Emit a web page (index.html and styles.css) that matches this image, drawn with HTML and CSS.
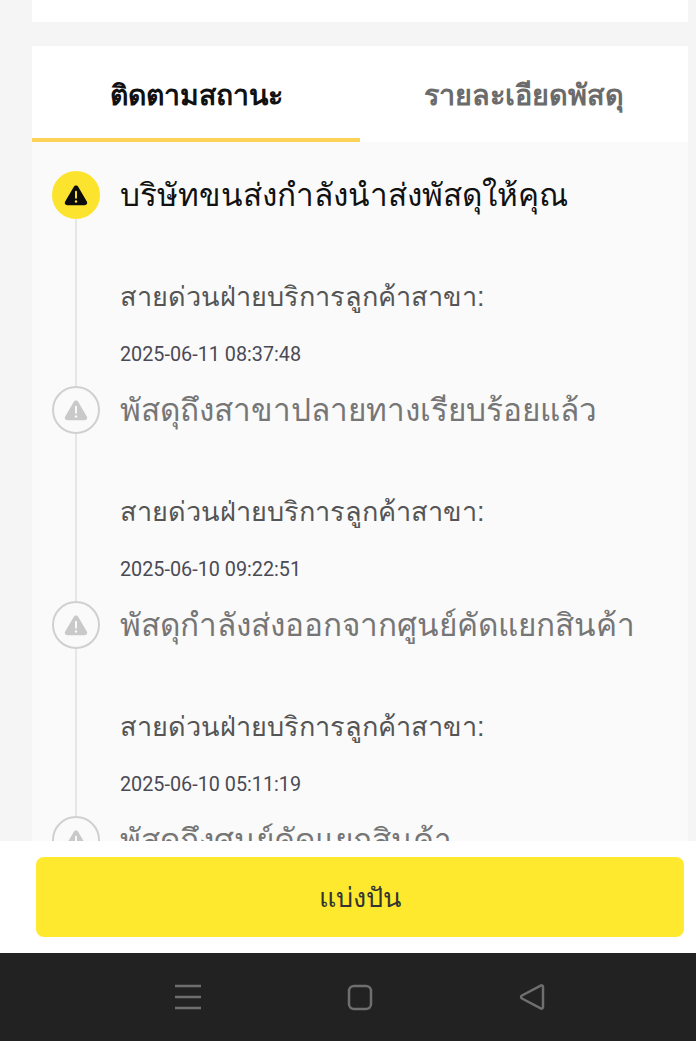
FILE: index.html
```html
<!DOCTYPE html>
<html lang="th">
<head>
<meta charset="utf-8">
<title>ติดตามสถานะ</title>
<link rel="stylesheet" href="styles.css">
</head>
<body>
<div class="page">
  <main class="scroll">
    <div class="top-card"></div>
    <section class="card">
      <div class="tabs">
        <div class="tab tab-active">ติดตามสถานะ</div>
        <div class="tab">รายละเอียดพัสดุ</div>
      </div>
      <div class="timeline">
        <div class="step step-current">
          <div class="marker"><svg class="warn" viewBox="0 0 24 24"><path class="warn-body" d="M12 3.200c-.9 0-1.600.5-2 1.200L2 18c-.9 1.600.2 3.400 2 3.400h16c1.800 0 2.900-1.800 2-3.400L14 4.400c-.4-.7-1.100-1.200-2-1.200z"/><rect class="warn-mark" x="11.100" y="8" width="1.800" height="7.400" rx=".9"/><circle class="warn-mark" cx="12" cy="18" r="1.100"/></svg></div>
          <div class="body">
            <div class="title">บริษัทขนส่งกำลังนำส่งพัสดุให้คุณ</div>
            <div class="sub">สายด่วนฝ่ายบริการลูกค้าสาขา:</div>
            <div class="date">2025-06-11 08:37:48</div>
          </div>
        </div>
        <div class="step">
          <div class="marker"><svg class="warn" viewBox="0 0 24 24"><path class="warn-body" d="M12 3.200c-.9 0-1.600.5-2 1.200L2 18c-.9 1.600.2 3.400 2 3.400h16c1.800 0 2.900-1.800 2-3.400L14 4.400c-.4-.7-1.100-1.200-2-1.200z"/><rect class="warn-mark" x="11.100" y="8" width="1.800" height="7.400" rx=".9"/><circle class="warn-mark" cx="12" cy="18" r="1.100"/></svg></div>
          <div class="body">
            <div class="title">พัสดุถึงสาขาปลายทางเรียบร้อยแล้ว</div>
            <div class="sub">สายด่วนฝ่ายบริการลูกค้าสาขา:</div>
            <div class="date">2025-06-10 09:22:51</div>
          </div>
        </div>
        <div class="step">
          <div class="marker"><svg class="warn" viewBox="0 0 24 24"><path class="warn-body" d="M12 3.200c-.9 0-1.600.5-2 1.200L2 18c-.9 1.600.2 3.400 2 3.400h16c1.800 0 2.900-1.800 2-3.400L14 4.400c-.4-.7-1.100-1.200-2-1.200z"/><rect class="warn-mark" x="11.100" y="8" width="1.800" height="7.400" rx=".9"/><circle class="warn-mark" cx="12" cy="18" r="1.100"/></svg></div>
          <div class="body">
            <div class="title">พัสดุกำลังส่งออกจากศูนย์คัดแยกสินค้า</div>
            <div class="sub">สายด่วนฝ่ายบริการลูกค้าสาขา:</div>
            <div class="date">2025-06-10 05:11:19</div>
          </div>
        </div>
        <div class="step">
          <div class="marker"><svg class="warn" viewBox="0 0 24 24"><path class="warn-body" d="M12 3.200c-.9 0-1.600.5-2 1.200L2 18c-.9 1.600.2 3.400 2 3.400h16c1.800 0 2.900-1.800 2-3.400L14 4.400c-.4-.7-1.100-1.200-2-1.200z"/><rect class="warn-mark" x="11.100" y="8" width="1.800" height="7.400" rx=".9"/><circle class="warn-mark" cx="12" cy="18" r="1.100"/></svg></div>
          <div class="body">
            <div class="title">พัสดุถึงศูนย์คัดแยกสินค้า</div>
          </div>
        </div>
      </div>
    </section>
  </main>
  <footer class="footer">
    <button class="share" type="button">แบ่งปัน</button>
  </footer>
  <nav class="sysnav">
    <svg class="nav-icon" viewBox="0 0 28 28"><path d="M1 3h26M1 14h26M1 25h26"/></svg>
    <svg class="nav-icon" viewBox="0 0 28 28"><rect x="3" y="3" width="22" height="23" rx="5"/></svg>
    <svg class="nav-icon" viewBox="0 0 28 28"><path d="M25 4v20c0 1.500-1.200 2-2.300 1.400L4 15.500c-1.300-.8-1.300-2.200 0-3L22.700 2.600C23.800 2 25 2.500 25 4z"/></svg>
  </nav>
</div>
</body>
</html>
```
FILE: styles.css
```css
* { box-sizing: border-box; }
html, body { margin: 0; padding: 0; }
body {
  font-family: "Liberation Sans", sans-serif;
  background: #f5f5f5;
}
.page {
  height: 1041px;
  width: 696px;
  display: flex;
  flex-direction: column;
  overflow: hidden;
}
.scroll {
  flex: 1;
  min-height: 0;
  overflow: hidden;
  padding: 0 8px 0 32px;
  background: #f5f5f5;
}
.top-card { height: 22px; background: #fff; margin-bottom: 24px; }
.tabs { display: flex; height: 96px; background: #fff; }
.tab {
  flex: 1;
  display: flex;
  align-items: center;
  justify-content: center;
  font-size: 28.800px;
  font-weight: 700;
  color: #6b6b6b;
  border-bottom: 4px solid transparent;
  padding-top: 6px;
}
.tab-active { color: #111; border-bottom-color: #fcd257; font-size: 28.400px; }
.timeline { background: #fafafa; padding: 29px 0 0 20px; }
.step { display: flex; height: 215px; gap: 20px; position: relative; }
.step::before {
  content: "";
  position: absolute;
  left: 23px;
  top: 48px;
  bottom: 0;
  width: 2px;
  background: #e6e6e6;
}
.marker {
  width: 48px;
  height: 48px;
  flex: none;
  border-radius: 50%;
  background: #fafafa;
  border: 2px solid #d0d0d0;
  display: flex;
  align-items: center;
  justify-content: center;
}
.warn { width: 26px; height: 26px; }
.warn-body { fill: #c9c9c9; }
.warn-mark { fill: #fafafa; }
.step-current .marker { background: #fce42e; border-color: #fce42e; }
.step-current .warn-body { fill: #0c0c0c; }
.step-current .warn-mark { fill: #fce42e; }
.body { flex: 1; min-width: 0; }
.title { font-size: 31.500px; line-height: 48px; color: #767676; white-space: nowrap; }
.step-current .title { color: #111; }
.sub { font-size: 27.100px; line-height: 40px; color: #555; margin-top: 58px; white-space: nowrap; }
.date { font-family: Roboto, sans-serif; font-size: 19.800px; line-height: 24px; color: #4a4a55; margin-top: 26px; }
.footer { height: 112px; flex: none; background: #fff; padding: 16px 12px 16px 36px; }
.share {
  display: block;
  width: 100%;
  height: 80px;
  border: 0;
  border-radius: 8px;
  background: #ffe92f;
  color: #333;
  font-family: inherit;
  font-size: 27px;
}
.sysnav {
  height: 88px;
  flex: none;
  background: #222;
  display: flex;
  align-items: center;
  justify-content: center;
  gap: 144px;
  padding-left: 24px;
}
.nav-icon { width: 28px; height: 28px; fill: none; stroke: #6f6f6f; stroke-width: 2.500; }
```
